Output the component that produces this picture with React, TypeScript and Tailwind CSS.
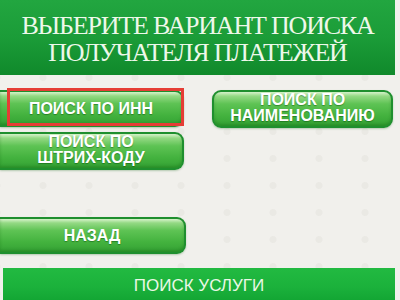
import React from "react";

const btn =
  "flex flex-col items-center justify-center rounded-r-[9px] border-2 border-l-0 border-[#1f8f2e] bg-[linear-gradient(180deg,#d8f3cc_0%,#94d984_12%,#5ec354_35%,#43b23e_70%,#34a234_100%)] shadow-[inset_0_-2px_3px_rgba(0,80,0,0.25),0_1px_2px_rgba(0,90,0,0.25)] text-white font-bold text-[16px] [text-shadow:0_1px_1px_rgba(0,70,0,0.45)]";

export default function App() {
  return (
    <div
      className="w-[400px] h-[300px] overflow-hidden bg-[#f1f0ec] bg-[radial-gradient(circle,#eae9e4_3px,transparent_4px)] bg-[length:46px_27px] bg-[position:20px_10px] flex flex-col"
      style={{ fontFamily: '"Liberation Sans", Arial, sans-serif' }}
    >
      <div className="w-[395px] h-[75px] shrink-0 bg-[linear-gradient(180deg,#22a640_0%,#1b9c38_50%,#10892b_100%)] flex flex-col items-center justify-center pt-[2px]">
        <div
          className="text-[#eef8ea] text-[26px] leading-[27px] text-center tracking-[-1.2px]"
          style={{ fontFamily: '"Liberation Serif", "Times New Roman", serif' }}
        >
          <div>ВЫБЕРИТЕ ВАРИАНТ ПОИСКА</div>
          <div>ПОЛУЧАТЕЛЯ ПЛАТЕЖЕЙ</div>
        </div>
      </div>

      <div className="flex mt-[15px]">
        <div className="flex flex-col w-[184px]">
          <div className="relative">
            <div className={btn + " h-[37px] leading-[16px]"}>
              <div>ПОИСК ПО ИНН</div>
            </div>
            <div className="absolute left-[7px] top-[-2px] w-[177px] h-[38px] border-[3px] border-[#e53d35]" />
          </div>
          <div className={btn + " h-[38px] mt-[5px] leading-[16px] pb-[2px]"}>
            <div>ПОИСК ПО</div>
            <div>ШТРИХ-КОДУ</div>
          </div>
          <div className={btn + " h-[37px] mt-[47px] w-[186px] leading-[16px]"}>
            <div>НАЗАД</div>
          </div>
        </div>
        <div className="flex flex-col ml-[28px]">
          <div className="h-[38px] w-[181px] flex flex-col items-center justify-center rounded-[9px] border-2 border-[#1f8f2e] bg-[linear-gradient(180deg,#d8f3cc_0%,#94d984_12%,#5ec354_35%,#43b23e_70%,#34a234_100%)] shadow-[inset_0_-2px_3px_rgba(0,80,0,0.25),0_1px_2px_rgba(0,90,0,0.25)] text-white font-bold leading-[16px] text-[16px] [text-shadow:0_1px_1px_rgba(0,70,0,0.45)] pb-[2px]">
            <div>ПОИСК ПО</div>
            <div>НАИМЕНОВАНИЮ</div>
          </div>
        </div>
      </div>

      <div className="mt-[14px] ml-[3px] w-[392px] h-[32px] shrink-0 bg-[linear-gradient(180deg,#22ba41_0%,#1bb13b_60%,#13a634_100%)] flex items-center justify-center">
        <span className="text-[#eaf8e6] text-[17px] leading-none pt-[2px]">ПОИСК УСЛУГИ</span>
      </div>
    </div>
  );
}
